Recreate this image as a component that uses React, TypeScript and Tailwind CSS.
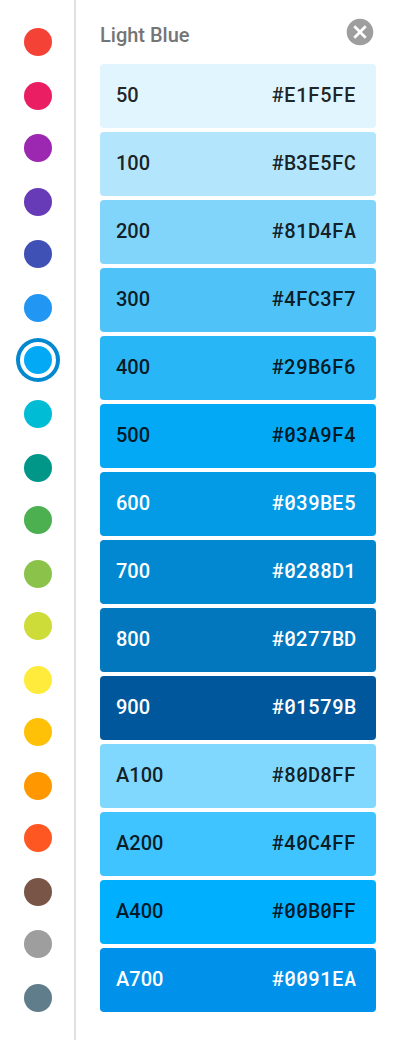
import { clsx } from 'clsx';

interface Hue {
  name: string;
  dot: string;
  tight?: boolean;
}

interface Shade {
  label: string;
  hex: string;
  light?: boolean;
}

const HUES: Hue[] = [
  { name: 'Red', dot: '#F44336' },
  { name: 'Pink', dot: '#E91E63', tight: true },
  { name: 'Purple', dot: '#9C27B0' },
  { name: 'Deep Purple', dot: '#673AB7', tight: true },
  { name: 'Indigo', dot: '#3F51B5' },
  { name: 'Blue', dot: '#2196F3', tight: true },
  { name: 'Light Blue', dot: '#03A9F4' },
  { name: 'Cyan', dot: '#00BCD4' },
  { name: 'Teal', dot: '#009688', tight: true },
  { name: 'Green', dot: '#4CAF50' },
  { name: 'Light Green', dot: '#8BC34A', tight: true },
  { name: 'Lime', dot: '#CDDC39' },
  { name: 'Yellow', dot: '#FFEB3B', tight: true },
  { name: 'Amber', dot: '#FFC107' },
  { name: 'Orange', dot: '#FF9800', tight: true },
  { name: 'Deep Orange', dot: '#FF5722' },
  { name: 'Brown', dot: '#795548', tight: true },
  { name: 'Grey', dot: '#9E9E9E' },
  { name: 'Blue Grey', dot: '#607D8B' },
];

const SHADES: Shade[] = [
  { label: '50', hex: '#E1F5FE' },
  { label: '100', hex: '#B3E5FC' },
  { label: '200', hex: '#81D4FA' },
  { label: '300', hex: '#4FC3F7' },
  { label: '400', hex: '#29B6F6' },
  { label: '500', hex: '#03A9F4' },
  { label: '600', hex: '#039BE5', light: true },
  { label: '700', hex: '#0288D1', light: true },
  { label: '800', hex: '#0277BD', light: true },
  { label: '900', hex: '#01579B', light: true },
  { label: 'A100', hex: '#80D8FF' },
  { label: 'A200', hex: '#40C4FF' },
  { label: 'A400', hex: '#00B0FF' },
  { label: 'A700', hex: '#0091EA', light: true },
];

function HueRail({ selected }: { selected: string }) {
  return (
    <nav className="flex h-full w-[76px] shrink-0 flex-col items-start border-r-2 border-[#e0e0e0] pt-7 pl-6">
      {HUES.map((hue) => (
        <button
          key={hue.name}
          aria-label={hue.name}
          className={clsx(
            'size-7 shrink-0 rounded-full',
            hue.tight ? 'mb-6' : 'mb-[26px]',
            hue.name === selected && 'ring-4 ring-[#0288D1] ring-offset-4 ring-offset-white',
          )}
          style={{ backgroundColor: hue.dot }}
        />
      ))}
    </nav>
  );
}

function ShadeRow({ shade }: { shade: Shade }) {
  return (
    <li
      className={clsx(
        'flex h-16 items-center justify-between rounded-[4px] pr-5 pb-0.5 pl-4 text-xl font-medium',
        shade.light ? 'text-white' : 'text-black/87',
      )}
      style={{ backgroundColor: shade.hex }}
    >
      <span>{shade.label}</span>
      <span className="pb-0.5 font-['Roboto_Mono','Liberation_Mono',monospace]">{shade.hex}</span>
    </li>
  );
}

export default function App() {
  return (
    <div className="flex h-[1040px] w-[400px] bg-white font-['Roboto',sans-serif]">
      <HueRail selected="Light Blue" />
      <main className="flex-1 px-6">
        <header className="flex h-16 items-center justify-between">
          <h1 className="pt-1.5 text-xl font-medium text-[#757575]">Light Blue</h1>
          <button aria-label="Close">
            <svg viewBox="0 0 24 24" className="size-8 fill-[#9e9e9e]">
              <path d="M12 2C6.47 2 2 6.47 2 12s4.47 10 10 10 10-4.47 10-10S17.53 2 12 2zm5 13.59L15.59 17 12 13.41 8.41 17 7 15.59 10.59 12 7 8.41 8.41 7 12 10.59 15.59 7 17 8.41 13.41 12 17 15.59z" />
            </svg>
          </button>
        </header>
        <ul className="flex flex-col gap-1">
          {SHADES.map((shade) => (
            <ShadeRow key={shade.label} shade={shade} />
          ))}
        </ul>
      </main>
    </div>
  );
}
